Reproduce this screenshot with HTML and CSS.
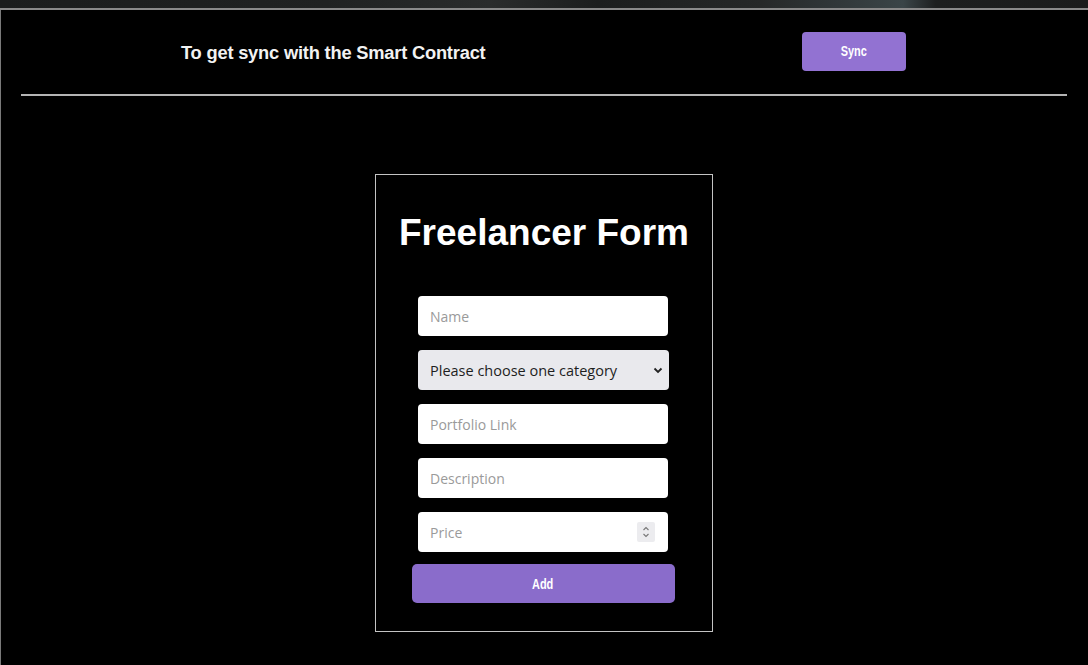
FILE: index.html
```html
<!DOCTYPE html>
<html>
<head>
<meta charset="utf-8">
<link rel="stylesheet" href="styles.css">
</head>
<body>
<div class="page">
  <div class="banner"></div>
  <header class="topbar">
    <p class="sync-text">To get sync with the Smart Contract</p>
    <button class="sync-btn"><span class="btn-label">Sync</span></button>
  </header>
  <hr class="divider">
  <main class="main">
    <form class="form-card">
      <h1 class="form-title">Freelancer Form</h1>
      <div class="fields">
        <input class="field" type="text" placeholder="Name">
        <div class="select-wrap">
          <select class="field select">
            <option>Please choose one category</option>
          </select>
          <svg class="chev" width="10" height="7" viewBox="0 0 10 7"><path d="M1.5 1.5 L5 5 L8.5 1.5" fill="none" stroke="#222" stroke-width="1.8"/></svg>
        </div>
        <input class="field" type="text" placeholder="Portfolio Link">
        <input class="field" type="text" placeholder="Description">
        <div class="price-wrap">
          <input class="field price" type="text" placeholder="Price">
          <span class="spin">
            <svg width="10" height="16" viewBox="0 0 10 16"><path d="M2.5 6 L5 3.5 L7.5 6" fill="none" stroke="#777" stroke-width="1.1"/><path d="M2.5 10 L5 12.5 L7.5 10" fill="none" stroke="#777" stroke-width="1.1"/></svg>
          </span>
        </div>
      </div>
      <button class="add-btn" type="button"><span class="btn-label">Add</span></button>
    </form>
  </main>
</div>
</body>
</html>
```
FILE: styles.css
```css
html, body {
  margin: 0;
  padding: 0;
  background: #000;
}
.page {
  min-height: 665px;
  box-shadow: inset 1px 0 0 #7a7a7a;
  font-family: "Liberation Sans", Arial, sans-serif;
}
.banner {
  height: 8px;
  background: linear-gradient(90deg, #1b1d1d 0%, #202222 30%, #2a2c2c 45%, #1c1e1e 55%, #262828 70%, #3a4548 83%, #1d1f1f 86%, #1b1c1c 100%);
  border-bottom: 2px solid #8a8a8a;
}
.topbar {
  display: flex;
  align-items: center;
  height: 84px;
  padding: 0 182px 0 181px;
}
.sync-text {
  margin: 0;
  color: #f2f2f2;
  font-size: 18.3px;
  font-weight: bold;
  letter-spacing: -0.2px;
  padding-top: 2px;
}
.sync-btn {
  margin-left: auto;
  width: 104px;
  height: 39px;
  border: none;
  border-radius: 4px;
  background: #9272d2;
  color: #fff;
  font-family: "Liberation Sans", sans-serif;
  font-weight: bold;
  font-size: 14px;
  transform: translateY(-1px);
}
.btn-label {
  display: inline-block;
  transform: scaleX(0.78);
}
.divider {
  margin: 0 21px 0 21px;
  border: none;
  height: 2px;
  background: #b4b4b4;
}
.main {
  display: flex;
  justify-content: center;
  padding-top: 78px;
}
.form-card {
  width: 338px;
  box-sizing: border-box;
  border: 1px solid #c4c4c4;
  padding: 38px 2px 28px 0;
  display: flex;
  flex-direction: column;
  align-items: center;
}
.form-title {
  margin: 0 0 0 2px;
  color: #fff;
  font-size: 37px;
  line-height: 40px;
  font-weight: bold;
}
.fields {
  margin-top: 43px;
  display: flex;
  flex-direction: column;
  gap: 14px;
  width: 250px;
}
.field {
  display: block;
  width: 250px;
  height: 40px;
  box-sizing: border-box;
  border: none;
  border-radius: 4px;
  background: #fff;
  padding: 0 12px;
  font-family: "Open Sans", "Noto Sans", sans-serif;
  font-size: 14px;
  color: #222;
  outline: none;
}
.field::placeholder {
  color: #9a9a9a;
}
.select-wrap, .price-wrap {
  position: relative;
}
.select {
  width: 251px;
  appearance: none;
  -webkit-appearance: none;
  background: #e9e9ed;
  color: #1e1e1e;
  font-size: 14.5px;
  font-weight: 500;
}
.chev {
  position: absolute;
  right: 5px;
  top: 17px;
}
.spin {
  position: absolute;
  right: 13px;
  top: 10px;
  width: 18px;
  height: 20px;
  background: #ececef;
  border-radius: 2px;
  display: flex;
  align-items: center;
  justify-content: center;
}
.add-btn {
  margin-top: 12px;
  width: 263px;
  height: 39px;
  border: none;
  border-radius: 5px;
  background: #8a6ccb;
  color: #fff;
  font-family: "Liberation Sans", sans-serif;
  font-weight: bold;
  font-size: 14px;
}
```
